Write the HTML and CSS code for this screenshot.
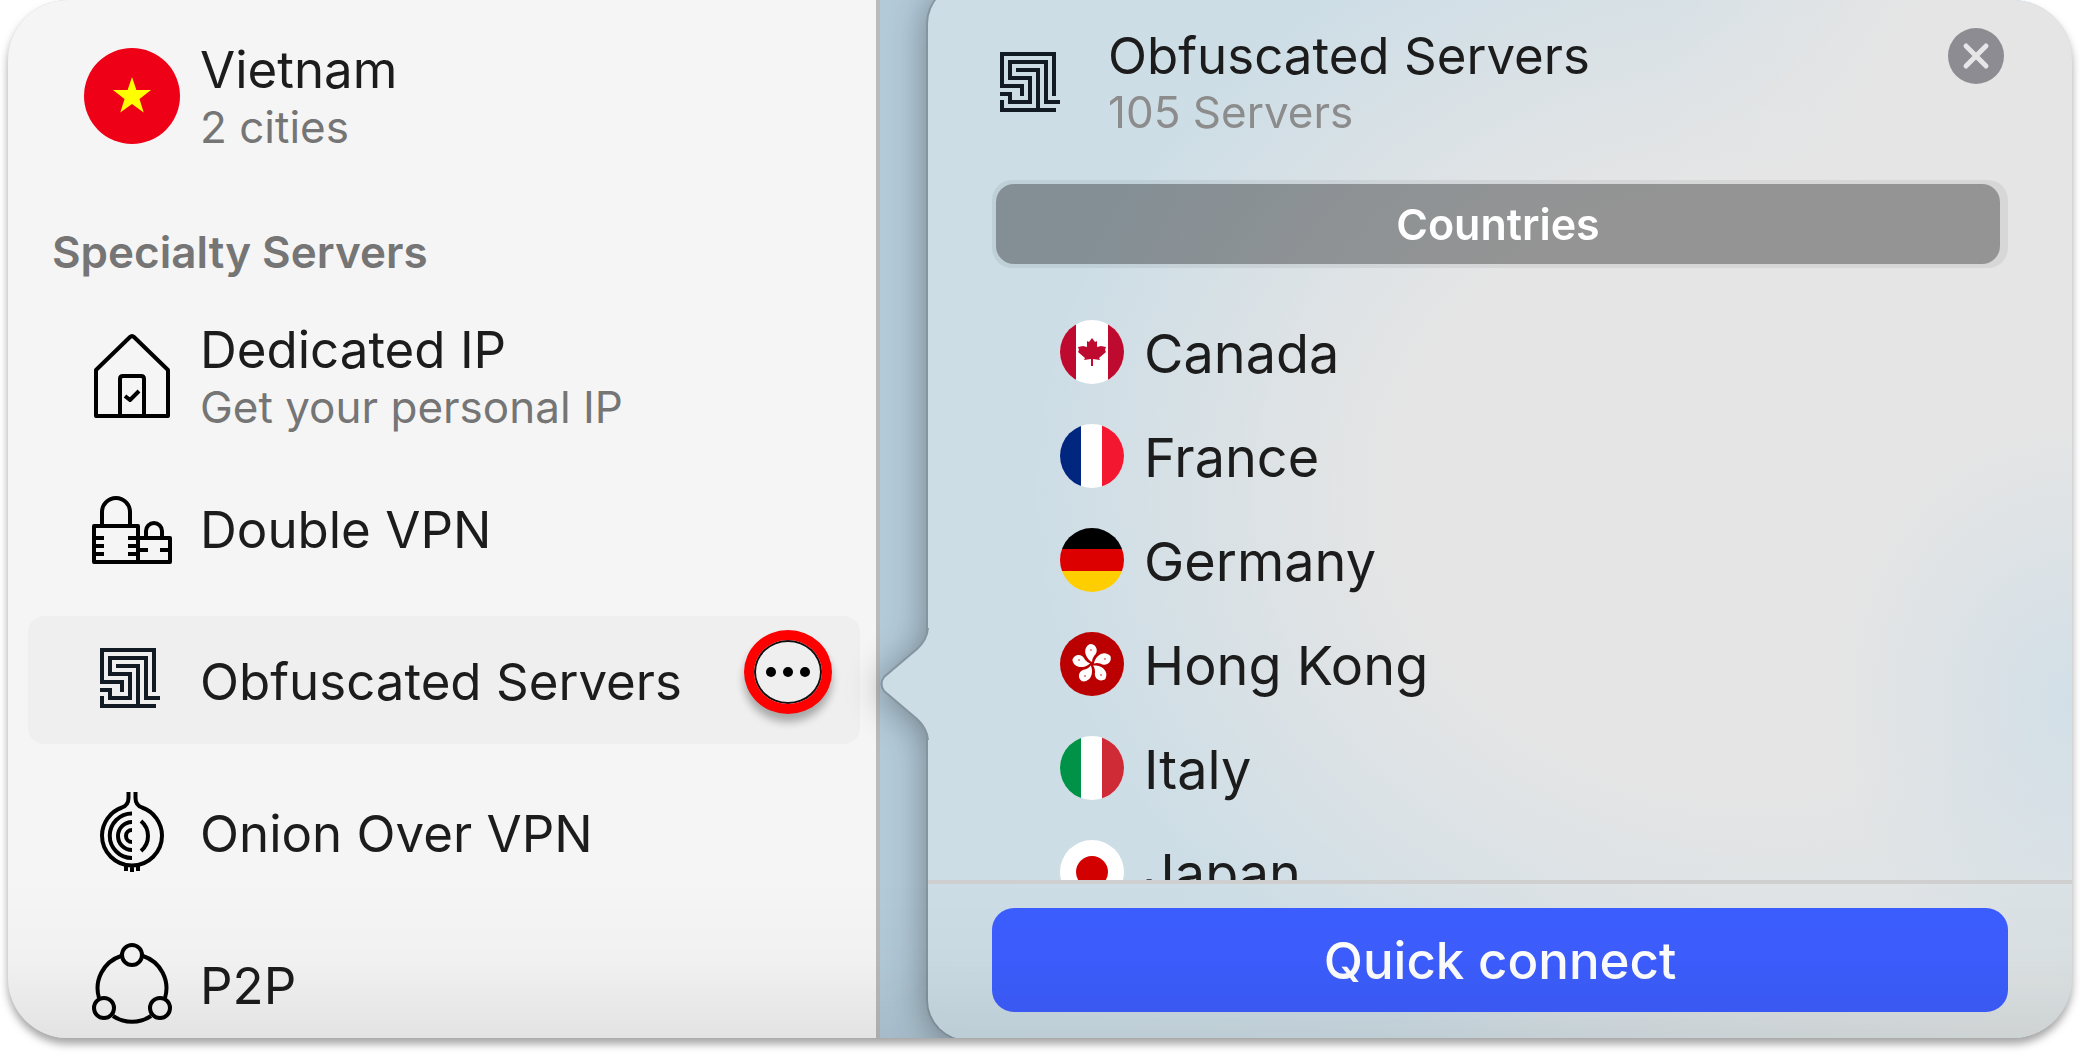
FILE: index.html
```html
<!DOCTYPE html>
<html lang="en">
<head>
  <meta charset="utf-8">
  <meta name="viewport" content="width=device-width, initial-scale=1.0">
  <title>Specialty Servers</title>
  <link rel="stylesheet" href="styles.css">
</head>
<body>

<!-- maze icon, used in the sidebar and in the popover header -->
<svg class="defs" aria-hidden="true">
  <symbol id="maze" viewBox="16 16 60 60">
    <path d="M70 60V18H18V50H38V60M76 66H62V26H26V42H46V66H26V58H16M32 34H54V74M18 64V74H72" fill="none" stroke="#121b24" stroke-width="4"/>
  </symbol>
</svg>

<main class="window">
  <nav class="sidebar">
    <ul class="servers">
      <li class="server">
        <a href="#vietnam">
          <svg class="icon" viewBox="0 0 96 96"><circle cx="48" cy="48" r="48" fill="#ee0016"/><path d="M48 29l4.400 13H67L55.500 51l4.200 13.500L48 56l-11.700 8.500L40.500 51 29 42h14.600z" fill="#ff0"/></svg>
          <span class="text"><span class="name">Vietnam</span><span class="info">2 cities</span></span>
        </a>
      </li>
    </ul>
    <h2 class="section">Specialty Servers</h2>
    <ul class="servers">
      <li class="server">
        <a href="#dedicated">
          <svg class="icon line" viewBox="0 0 96 96"><path d="M12 88V42L46 9q2-2 4 0L84 42V88ZM36 88V51q0-3 3-3H57q3 0 3 3V88M41 68l5 4 9-9"/></svg>
          <span class="text"><span class="name">Dedicated IP</span><span class="info">Get your personal IP</span></span>
        </a>
      </li>
      <li class="server">
        <a href="#double">
          <svg class="icon line" viewBox="0 0 96 96"><path d="M10 46H54V82H10ZM18 46V32a14 14 0 0 1 28 0V46M54 58H86V82H54M62 58V51a8 8 0 0 1 16 0V58M10 58H20M10 66H20M10 74H20M44 58H54M44 66H54M44 74H54M54 70H64M76 70H86"/></svg>
          <span class="text"><span class="name">Double VPN</span></span>
        </a>
      </li>
      <li class="server active">
        <a href="#obfuscated">
          <span class="icon"><svg class="maze"><use href="#maze"/></svg></span>
          <span class="text"><span class="name">Obfuscated Servers</span></span>
        </a>
        <button class="more" type="button" aria-label="More">
          <svg viewBox="0 0 44 10"><circle cx="5" cy="5" r="5"/><circle cx="22" cy="5" r="5"/><circle cx="39" cy="5" r="5"/></svg>
        </button>
      </li>
      <li class="server">
        <a href="#onion">
          <svg class="icon line" viewBox="0 0 96 96"><path d="M44.500 8V14Q44.500 21 38 23.500A30 30 0 0 0 18 51.500A30 30 0 0 0 78 51.500A30 30 0 0 0 58 23.500Q51.500 21 51.500 14V8M48 29.500a22 22 0 0 0 0 44.500M48 38a14 14 0 0 0 0 28M48 46a6 6 0 0 0 0 12M57 37Q64 43 64 52T57 67M42 81V87M48 81V88M54 81V87"/></svg>
          <span class="text"><span class="name">Onion Over VPN</span></span>
        </a>
      </li>
      <li class="server">
        <a href="#p2p">
          <svg class="icon line" viewBox="0 0 96 96"><path d="M37 20A34 34 0 0 0 15 62M59 20A34 34 0 0 1 81 62M29 80A34 34 0 0 0 67 80"/><circle cx="48" cy="19" r="10"/><circle cx="20" cy="72" r="10"/><circle cx="76" cy="72" r="10"/></svg>
          <span class="text"><span class="name">P2P</span></span>
        </a>
      </li>
    </ul>
  </nav>

  <section class="popover">
    <svg class="arrow" viewBox="0 0 50 112"><path class="fill" d="M50 0H48Q47 12 37 21L4 49Q-1 56 4 63L37 91Q47 100 48 112H50Z"/><path class="edge" d="M48 0Q47 12 37 21L4 49Q-1 56 4 63L37 91Q47 100 48 112"/></svg>
    <header class="head">
      <svg class="maze"><use href="#maze"/></svg>
      <div class="text">
        <h1 class="name">Obfuscated Servers</h1>
        <p class="info">105 Servers</p>
      </div>
      <button class="close" type="button" aria-label="Close">
        <svg viewBox="0 0 56 56"><path d="M18 18L38 38M38 18L18 38"/></svg>
      </button>
    </header>
    <div class="tabs"><button class="tab" type="button">Countries</button></div>
    <ul class="countries">
      <li><a href="#ca"><svg class="flag" viewBox="0 0 64 64"><path fill="#fff" d="M0 0H64V64H0z"/><path fill="#bf0a30" d="M0 0H16V64H0zM48 0H64V64H48zM32 18l3 4 2-1v6l4-1 5 1-1 3 1 2-7 6 1 2-7-1v7h-2v-7l-7 1 1-2-7-6 1-2-1-3 5-1 4 1v-6l2 1z"/></svg><span>Canada</span></a></li>
      <li><a href="#fr"><svg class="flag" viewBox="0 0 64 64"><path fill="#fff" d="M0 0H64V64H0z"/><path fill="#00267f" d="M0 0H21V64H0z"/><path fill="#f31830" d="M42 0H64V64H42z"/></svg><span>France</span></a></li>
      <li><a href="#de"><svg class="flag" viewBox="0 0 64 64"><path d="M0 0H64V21H0z"/><path fill="#d00" d="M0 21H64V43H0z"/><path fill="#ffce00" d="M0 43H64V64H0z"/></svg><span>Germany</span></a></li>
      <li><a href="#hk"><svg class="flag" viewBox="0 0 64 64">
        <path fill="#ba0000" d="M0 0H64V64H0z"/>
        <path id="petal" fill="#fff" d="M32 30C25 26 22 16 30 12C37 12 39 20 34 24Q32 27 32 30"/>
        <use href="#petal" transform="rotate(72 32 32)"/><use href="#petal" transform="rotate(144 32 32)"/><use href="#petal" transform="rotate(216 32 32)"/><use href="#petal" transform="rotate(288 32 32)"/>
        <g fill="#e07070"><circle cx="31" cy="18" r="1"/><circle cx="45" cy="27" r="1"/><circle cx="41" cy="43" r="1"/><circle cx="25" cy="44" r="1"/><circle cx="19" cy="28" r="1"/></g>
      </svg><span>Hong Kong</span></a></li>
      <li><a href="#it"><svg class="flag" viewBox="0 0 64 64"><path fill="#fff" d="M0 0H64V64H0z"/><path fill="#009246" d="M0 0H21V64H0z"/><path fill="#ce2b37" d="M42 0H64V64H42z"/></svg><span>Italy</span></a></li>
      <li><a href="#jp"><svg class="flag" viewBox="0 0 64 64"><path fill="#fff" d="M0 0H64V64H0z"/><circle cx="32" cy="32" r="16" fill="#d30000"/></svg><span>Japan</span></a></li>
    </ul>
    <footer class="foot"><button class="connect" type="button">Quick connect</button></footer>
  </section>
</main>

</body>
</html>
```

FILE: styles.css
```css
* { box-sizing: border-box; }
body {
  margin: 0;
  padding: 0 8px 16px;
  height: 100vh;
  background: #fff;
  color: #1c1c1c;
  font-family: Inter, "Liberation Sans", sans-serif;
}
h1, h2, p, ul { margin: 0; padding: 0; font-weight: normal; }
ul { list-style: none; }
a { color: inherit; text-decoration: none; display: flex; align-items: center; }
button { font-family: inherit; border: 0; padding: 0; }
svg { display: block; }
.defs { display: none; }

.window {
  position: relative;
  display: flex;
  height: 100%;
  border-radius: 60px;
  overflow: hidden;
  background: #b3cad9;
}
body::before {
  content: "";
  position: absolute;
  inset: 0 8px 16px;
  border-radius: 60px;
  box-shadow: 0 6px 8px rgba(0, 0, 0, .36);
}
/* soft shade along the bottom edge */
.window::after {
  content: "";
  position: absolute;
  inset: auto 0 0;
  height: 160px;
  background: linear-gradient(rgba(0, 0, 0, 0), rgba(0, 0, 0, .015) 50%, rgba(0, 0, 0, .07));
  pointer-events: none;
}

.sidebar {
  flex: 0 0 872px;
  padding: 32px 16px 0 20px;
  background: #f5f5f5;
  border-right: 4px solid #bababa;
}
.servers { display: flex; flex-direction: column; gap: 24px; }
.server { display: flex; height: 128px; border-radius: 16px; padding: 0 28px 0 56px; }
.server a { flex: 1; gap: 20px; }
.active { background: #efefef; }
.section { padding: 64px 24px 0; height: 152px; font-size: 44px; line-height: 56px; font-weight: 600; color: #757575; }
.text { display: flex; flex-direction: column; }
.name { font-size: 51px; line-height: 56px; }
.info { font-size: 44px; line-height: 56px; color: #757575; }
.server .text { padding-top: 4px; }
.server .name { line-height: 58px; }
.icon { width: 96px; height: 96px; }
.line { fill: none; stroke: #000; stroke-width: 4px; stroke-linejoin: round; }
.maze { width: 60px; height: 60px; }
.icon .maze { margin: 16px; }
.more {
  display: flex;
  align-items: center;
  justify-content: center;
  width: 88px;
  height: 84px;
  margin-top: 14px;
  border: 10px solid #f00;
  border-radius: 50%;
  background: #efefef;
  box-shadow: inset 0 0 0 2px #111, 0 8px 8px rgba(0, 0, 0, .3);
}
.more svg { width: 44px; height: 10px; }

.popover {
  position: relative;
  flex: 1;
  display: flex;
  flex-direction: column;
  margin: -16px 0 -2px 48px;
  padding-top: 16px;
  border-radius: 40px 0 0 40px;
  background:
    radial-gradient(ellipse 240px 280px at 100% 68%, #d2dfe7, rgba(210, 223, 231, 0)),
    radial-gradient(ellipse 420px 600px at 100% 22%, #e5e5e5 50%, rgba(229, 229, 229, 0)),
    radial-gradient(ellipse 720px 600px at 72% 48%, #e5e5e5 50%, rgba(229, 229, 229, 0)),
    radial-gradient(ellipse 700px 300px at 100% 100%, #dfe4e4, rgba(223, 228, 228, 0)),
    linear-gradient(90deg, #ccdde6, #d1dfe7);
  box-shadow: -1px 0 0 1px #85949f;
  filter: drop-shadow(0 4px 18px rgba(0, 0, 0, .36));
}
.arrow { position: absolute; left: -48px; top: 644px; width: 50px; height: 112px; }
.arrow .fill { fill: #ccdde6; }
.arrow .edge { fill: none; stroke: #85949f; stroke-width: 2px; }
.head { display: flex; height: 180px; padding: 28px 68px 0 72px; }
.head .maze { margin: 24px 48px 0 0; }
.head .text { flex: 1; }
.head .info { color: #8c8c8c; }
.close { width: 56px; height: 56px; border-radius: 50%; background: #8c8c92; }
.close path { stroke: #e6e6e8; stroke-width: 5px; stroke-linecap: round; }
.tabs { margin: 0 64px; padding: 4px 8px 4px 4px; border-radius: 20px; background: rgba(0, 0, 0, .06); }
.tab { display: block; width: 100%; height: 80px; border-radius: 18px; background: rgba(0, 0, 0, .31); color: #fff; font-size: 43px; font-weight: 600; }
.countries { flex: 1 1 0; min-height: 0; overflow: hidden; padding: 32px 132px 0; }
.countries a { gap: 20px; height: 104px; font-size: 54px; line-height: 64px; }
.countries span { padding-top: 4px; }
.flag { width: 64px; height: 64px; border-radius: 50%; }
.foot { border-top: 4px solid #d0cfcf; padding: 24px 64px 28px; }
.connect { display: block; width: 100%; height: 104px; border-radius: 22px; background: #3d5eff; color: #fff; font-size: 51px; font-weight: 500; }
```
